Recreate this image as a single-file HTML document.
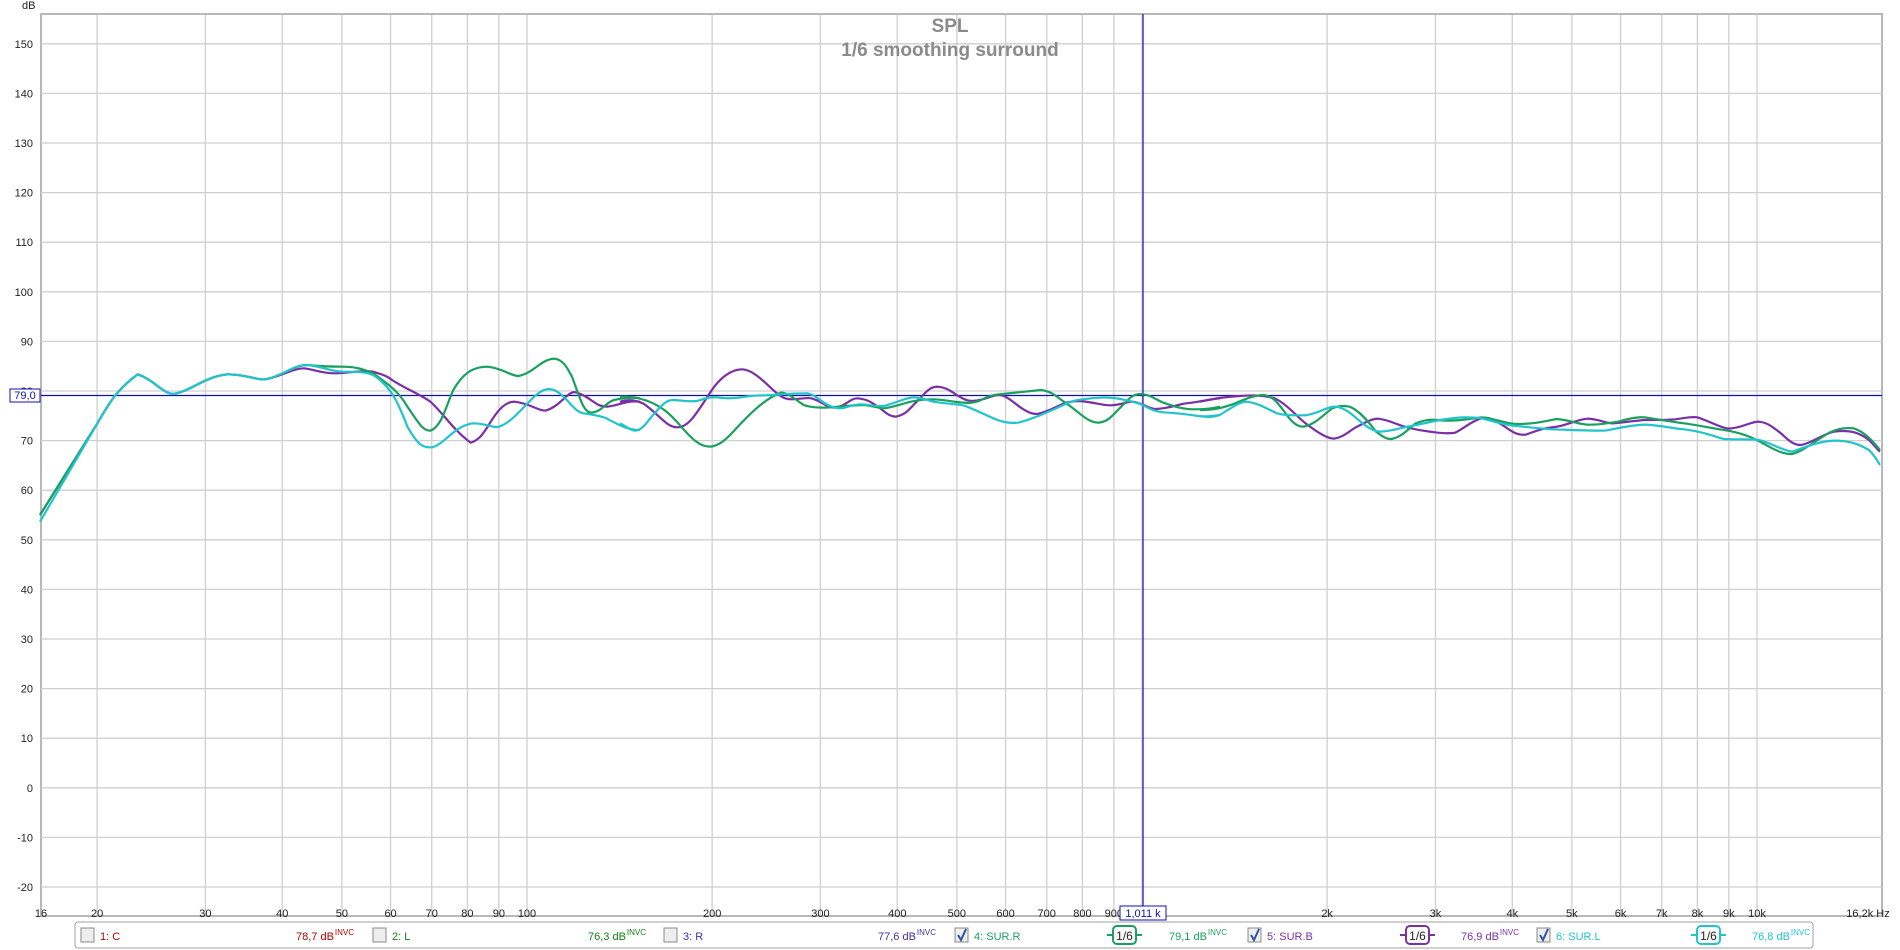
<!DOCTYPE html>
<html><head><meta charset="utf-8"><style>
body{margin:0;background:#fff;width:1900px;height:950px;overflow:hidden;font-family:"Liberation Sans",sans-serif}
svg{position:absolute;left:0;top:0}
.l{font-size:11px;fill:#222}
</style></head><body>
<svg width="1900" height="950" xmlns="http://www.w3.org/2000/svg">
<rect x="41" y="14" width="1841" height="902" fill="#fff" stroke="#b8b8b8" stroke-width="2"/>
<g id="grid" stroke="#cfcfcf" stroke-width="1.3"></g>
<g id="ylab" class="l" text-anchor="end"></g>
<g id="xlab" class="l" text-anchor="middle"></g>
<text x="22" y="9" class="l">dB</text>
<text x="950" y="32" font-size="19" font-weight="bold" fill="#8a8a8a" text-anchor="middle">SPL</text>
<text x="950" y="56" font-size="19" font-weight="bold" fill="#8a8a8a" text-anchor="middle">1/6 smoothing surround</text>
<line x1="41" y1="395.5" x2="1882" y2="395.5" stroke="#1010b0" stroke-width="1.2"/>
<rect x="10" y="389" width="30" height="13" fill="#fff" stroke="#1010b0"/>
<text x="25" y="399" font-size="11" fill="#1010b0" text-anchor="middle">79,0</text>
<line x1="1143" y1="14" x2="1143" y2="906" stroke="#1010b0" stroke-width="1.2"/>
<rect x="1120" y="906" width="46" height="14" fill="#fff" stroke="#1010b0"/>
<text x="1143" y="917" font-size="11" fill="#1010b0" text-anchor="middle">1,011 k</text>
<g fill="none" stroke-width="2.2" stroke-linejoin="round">
<g transform="translate(40,340) scale(0.3827,0.3333)">
<path vector-effect="non-scaling-stroke" stroke="#7a2fa5" d="M0,525 L150,250 C180,190 200,150 255,103 C300,120 320,162 350,162 C400,150 430,110 490,103 C540,103 560,120 590,118 C640,105 660,85 690,85 C720,90 740,100 770,100 C800,100 840,90 870,95 C900,105 910,110 920,120 C960,150 990,160 1020,185 C1050,215 1080,270 1125,308 C1150,300 1160,275 1170,260 C1200,200 1220,185 1240,185 C1280,190 1300,212 1320,212 C1360,200 1380,150 1400,157 C1440,170 1450,200 1480,200 C1510,198 1530,180 1568,185"/>
<path vector-effect="non-scaling-stroke" stroke="#1aa05e" d="M0,525 L150,250 C180,190 200,150 255,103 C300,120 320,162 350,162 C400,150 430,110 490,103 C540,103 560,120 590,118 C640,105 660,75 700,75 C740,80 760,80 790,80 C820,80 840,85 870,100 C920,140 940,160 960,200 C990,250 1000,272 1020,272 C1050,260 1060,200 1080,150 C1110,90 1140,80 1170,80 C1210,85 1230,108 1250,108 C1290,100 1310,56 1345,56 C1370,60 1380,90 1390,110 C1410,170 1420,218 1440,218 C1470,215 1480,185 1500,180 C1530,172 1550,172 1568,175"/>
<path vector-effect="non-scaling-stroke" stroke="#22c4cc" d="M0,545 L150,250 C180,190 200,150 255,103 C300,120 320,162 350,162 C400,150 430,110 490,103 C540,103 560,120 590,118 C640,105 660,75 700,75 C740,80 760,95 790,95 C820,95 850,95 870,105 C920,140 940,200 960,260 C990,320 1000,322 1025,322 C1060,310 1080,260 1130,250 C1170,250 1180,265 1200,260 C1250,240 1290,147 1330,147 C1370,150 1390,215 1420,220 C1450,225 1470,230 1480,235 C1520,260 1540,270 1568,270"/>
</g>
<g transform="translate(620,340) scale(0.3827,0.3333)">
<path vector-effect="non-scaling-stroke" stroke="#7a2fa5" d="M0,185 C20,178 40,180 60,190 C100,220 120,262 150,262 C180,262 200,220 240,150 C270,100 300,88 320,88 C350,90 380,130 410,160 C430,178 440,178 450,178 C480,176 490,172 500,175 C530,185 540,203 560,203 C590,200 600,175 620,175 C650,178 660,190 680,205 C700,225 710,230 720,230 C750,225 760,200 780,180 C800,155 810,140 830,140 C850,142 860,150 880,165 C900,180 910,183 920,183 C960,180 970,165 990,165 C1010,165 1030,190 1050,205 C1070,220 1080,222 1090,222 C1120,215 1140,200 1160,190 C1180,183 1190,183 1200,183 C1240,187 1260,196 1280,196 C1310,196 1320,185 1340,185 C1370,190 1380,207 1400,207 C1440,205 1460,192 1480,190 C1520,185 1540,178 1568,175"/>
<path vector-effect="non-scaling-stroke" stroke="#1aa05e" d="M0,170 C30,168 50,175 70,182 C110,200 130,220 160,260 C190,300 210,320 235,320 C260,318 280,295 300,270 C340,220 380,175 420,158 C440,158 460,180 480,195 C500,203 520,203 540,203 C570,200 600,196 640,195 C670,200 680,205 690,205 C720,200 740,190 760,185 C790,178 800,178 820,178 C850,180 870,185 880,186 C910,190 920,190 940,182 C960,170 970,165 990,163 C1030,158 1060,155 1100,150 C1130,155 1140,170 1160,185 C1200,215 1220,248 1250,248 C1280,245 1290,220 1310,200 C1330,175 1340,162 1360,162 C1390,165 1400,180 1420,188 C1450,200 1470,208 1500,208 C1530,208 1550,205 1568,200"/>
<path vector-effect="non-scaling-stroke" stroke="#22c4cc" d="M0,250 C20,262 30,272 40,272 C60,270 70,245 90,220 C110,195 120,180 140,180 C170,182 180,186 200,183 C220,178 230,170 250,172 C280,176 290,175 310,173 C340,168 350,166 380,166 C410,165 440,160 490,160 C510,165 520,180 540,193 C560,205 570,205 580,205 C600,200 610,193 630,193 C660,195 670,200 690,198 C730,185 750,172 770,172 C800,175 810,185 830,187 C860,192 880,192 900,197 C930,210 950,222 970,232 C1000,248 1020,250 1040,248 C1070,240 1100,225 1130,210 C1160,195 1180,180 1210,178 C1240,172 1270,172 1290,174 C1320,178 1340,186 1360,192 C1390,210 1400,215 1420,217 C1460,220 1480,222 1510,228 C1530,232 1550,228 1568,225"/>
</g>
<g transform="translate(1200,340) scale(0.4401,0.3333)">
<path vector-effect="non-scaling-stroke" stroke="#7a2fa5" d="M0,185 C30,176 60,170 90,168 C120,165 140,165 170,175 C200,195 220,230 240,250 C270,280 290,296 305,296 C330,290 340,270 360,258 C380,245 390,236 405,236 C430,240 440,250 460,258 C490,270 510,273 540,278 C560,281 570,280 580,278 C600,265 620,240 645,233 C670,233 690,260 710,275 C720,283 730,285 740,284 C770,270 780,265 800,262 C830,260 850,240 880,236 C910,238 920,250 940,250 C970,246 990,242 1010,240 C1040,240 1060,240 1080,238 C1110,232 1120,230 1130,232 C1160,245 1180,262 1200,266 C1230,265 1250,245 1270,245 C1290,248 1300,260 1320,280 C1340,305 1350,315 1365,315 C1390,310 1410,285 1440,275 C1480,268 1500,280 1520,300 C1535,320 1540,330 1545,335"/>
<path vector-effect="non-scaling-stroke" stroke="#1aa05e" d="M0,210 C30,210 50,205 80,190 C110,172 130,165 145,165 C170,170 180,195 200,230 C215,255 225,260 235,260 C260,255 280,225 300,205 C320,195 330,198 340,200 C360,210 380,240 400,275 C420,295 425,297 435,297 C460,290 470,270 490,250 C510,240 520,238 540,240 C570,245 600,240 640,232 C670,235 690,250 720,252 C760,252 780,245 810,237 C840,240 850,250 880,254 C910,255 920,250 950,245 C970,238 990,230 1010,232 C1050,240 1070,245 1100,250 C1130,255 1150,262 1200,272 C1240,282 1260,295 1300,325 C1320,338 1330,342 1345,342 C1370,335 1400,300 1430,278 C1450,265 1470,263 1485,265 C1510,275 1530,305 1545,330"/>
<path vector-effect="non-scaling-stroke" stroke="#22c4cc" d="M0,228 C20,232 30,232 45,225 C70,205 90,185 105,185 C130,188 150,205 175,220 C190,226 200,226 240,226 C270,220 290,200 305,200 C320,200 335,210 360,240 C380,262 395,275 410,275 C440,272 460,262 480,258 C510,250 530,243 560,237 C590,232 610,230 640,235 C670,245 690,255 720,258 C750,262 770,265 800,268 C850,270 880,272 920,272 C950,265 980,255 1010,254 C1040,254 1070,265 1100,268 C1140,275 1160,285 1190,297 C1220,300 1250,296 1270,300 C1300,310 1320,330 1345,335 C1370,325 1400,305 1440,302 C1480,302 1500,315 1520,330 C1535,350 1540,365 1545,375"/>
</g>
</g>
<rect x="75" y="922" width="1738" height="26" rx="3" fill="#fff" stroke="#a0a0a0"/>
<g font-size="11">
<g id="legend"></g>
</g>
</svg>
<script>
const NS="http://www.w3.org/2000/svg";
function el(p,t,a,txt){const e=document.createElementNS(NS,t);for(const k in a)e.setAttribute(k,a[k]);if(txt!=null)e.textContent=txt;document.getElementById(p).appendChild(e);return e;}
const X=f=>527+615*Math.log10(f/100);
const Y=v=>391+(80-v)*4.96;
for(let v=150;v>=-20;v-=10){const y=Y(v);el("grid","line",{x1:41,x2:1882,y1:y,y2:y});el("ylab","text",{x:33,y:y+4},String(v));}
const fs=[];for(const d of [10,100,1000,10000])for(let m=1;m<10;m++){const f=d*m;if(f>=20&&f<=16200)fs.push(f);}
fs.forEach(f=>{const x=X(f);el("grid","line",{x1:x,x2:x,y1:15,y2:915});});
const labs={20:"20",30:"30",40:"40",50:"50",60:"60",70:"70",80:"80",90:"90",100:"100",200:"200",300:"300",400:"400",500:"500",600:"600",700:"700",800:"800",900:"900",2000:"2k",3000:"3k",4000:"4k",5000:"5k",6000:"6k",7000:"7k",8000:"8k",9000:"9k",10000:"10k"};
for(const f in labs)el("xlab","text",{x:X(+f),y:917},labs[f]);
el("xlab","text",{x:41,y:917},"16");
el("xlab","text",{x:1868,y:917},"16,2k Hz");
const items=[[81,"1: C",296,"78,7","#b00000",0,null],[373,"2: L",588,"76,3","#108010",0,null],[664,"3: R",878,"77,6","#4030a0",0,null],[955,"4: SUR.R",1169,"79,1","#1aa05e",1,1107],[1248,"5: SUR.B",1461,"76,9","#7a2fa5",1,1400],[1537,"6: SUR.L",1752,"76,8","#22c4cc",1,1691]];
items.forEach(([cx,name,vx,val,c,chk,ix])=>{
el("legend","rect",{x:cx,y:928,width:13,height:14,fill:"#eee",stroke:"#888"});
if(chk)el("legend","path",{d:`M${cx+3},${935} L${cx+6},${940} L${cx+11},${929}`,stroke:"#3050a0","stroke-width":2,fill:"none"});
el("legend","text",{x:cx+19,y:940,fill:c},name);
const t=el("legend","text",{x:vx,y:940,fill:c},val+" dB");
let w=36;try{w=t.getComputedTextLength();}catch(e){}
el("legend","text",{x:vx+w+1,y:935,fill:c,"font-size":"8"},"INVC");
if(ix){el("legend","line",{x1:ix,x2:ix+35,y1:935,y2:935,stroke:c,"stroke-width":2});
el("legend","rect",{x:ix+6,y:926,width:23,height:18,rx:4,fill:"#fff",stroke:c,"stroke-width":2});
el("legend","text",{x:ix+17.5,y:940,fill:"#222","text-anchor":"middle","font-size":"12"},"1/6");}
});
</script>
</body></html>
